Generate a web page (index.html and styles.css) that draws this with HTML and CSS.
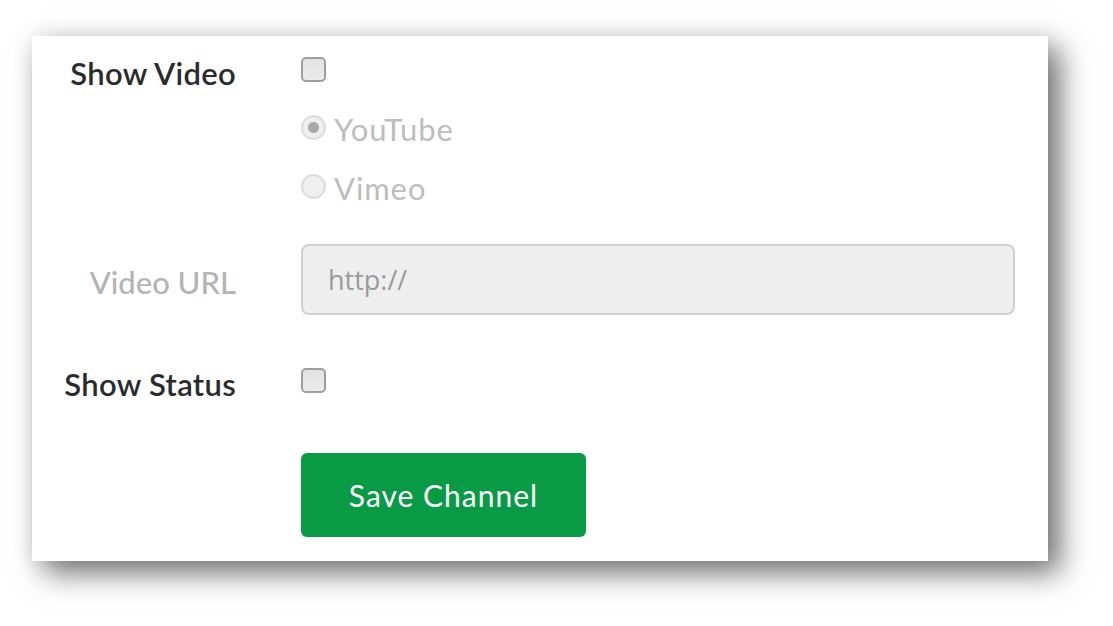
FILE: index.html
```html
<!DOCTYPE html>
<html>
<head>
<meta charset="utf-8">
<link rel="stylesheet" href="styles.css">
</head>
<body>
<div class="card">
  <div class="row r1">
    <div class="label">Show Video</div>
    <div class="control"><input type="checkbox" class="check"></div>
  </div>
  <div class="row r2">
    <div class="label"></div>
    <div class="control"><label class="radio-line"><input type="radio" name="v" class="radio" checked disabled><span>YouTube</span></label></div>
  </div>
  <div class="row r3">
    <div class="label"></div>
    <div class="control"><label class="radio-line"><input type="radio" name="v" class="radio" disabled><span>Vimeo</span></label></div>
  </div>
  <div class="row r4">
    <div class="label muted">Video URL</div>
    <div class="control"><div class="input">http://</div></div>
  </div>
  <div class="row r5">
    <div class="label">Show Status</div>
    <div class="control"><input type="checkbox" class="check"></div>
  </div>
  <div class="row r6">
    <div class="label"></div>
    <div class="control"><button class="btn">Save Channel</button></div>
  </div>
</div>
</body>
</html>
```
FILE: styles.css
```css
html, body {
  margin: 0;
  padding: 0;
  background: #ffffff;
  width: 1113px;
  height: 626px;
  overflow: hidden;
  font-family: Lato, "Liberation Sans", sans-serif;
}
body {
  padding: 36px 0 0 32px;
  box-sizing: border-box;
}
.card {
  width: 1016px;
  height: 525px;
  box-sizing: border-box;
  background: #ffffff;
  padding: 10px 33px 0 0;
  box-shadow: 12px 12px 28px rgba(0,0,0,0.55), 0 0 22px rgba(0,0,0,0.07);
}
.row {
  display: flex;
  align-items: center;
  gap: 65px;
  height: 50px;
}
.label {
  width: 204px;
  flex: none;
  text-align: right;
  font-size: 31px;
  font-weight: 600;
  color: #2b2b2b;
  letter-spacing: 0.3px;
  padding-top: 4px;
}
.label.muted {
  color: #b4b4b4;
  font-weight: 500;
  letter-spacing: 0;
}
.control {
  flex: 1;
  display: flex;
  align-items: center;
}
.r2 { margin-top: 8px; }
.r3 { margin-top: 9px; }
.r4 { margin-top: 31px; height: 71px; }
.r5 { margin-top: 42px; }
.r6 { margin-top: 46px; height: 84px; }

.check {
  -webkit-appearance: none;
  appearance: none;
  margin: 0;
  width: 25px;
  height: 25px;
  box-sizing: border-box;
  border: 2px solid #9e9e9e;
  border-radius: 5px;
  background: linear-gradient(#e2e2e2, #ececec);
  position: relative;
  top: -2px;
}
.radio-line {
  display: flex;
  align-items: center;
  gap: 8px;
  font-size: 31px;
  letter-spacing: 0.9px;
  color: #bdbdbd;
}
.radio {
  -webkit-appearance: none;
  appearance: none;
  margin: 0;
  width: 25px;
  height: 25px;
  box-sizing: border-box;
  border: 2px solid #dcdcdc;
  border-radius: 50%;
  background: #efefef;
  position: relative;
  top: -2px;
}
.radio:checked {
  background: radial-gradient(circle, #a9a9a9 0 5px, #efefef 6px);
}
.input {
  width: 714px;
  height: 71px;
  box-sizing: border-box;
  border: 2px solid #d0d0d0;
  border-radius: 8px;
  background: #eeeeee;
  display: flex;
  align-items: center;
  padding: 0 0 0 25px;
  font-family: "Open Sans", Lato, sans-serif;
  font-size: 27px;
  color: #9a9a9a;
}
.btn {
  width: 285px;
  height: 84px;
  border: none;
  border-radius: 6px;
  background: #099a45;
  color: #ffffff;
  font-family: Lato, "Liberation Sans", sans-serif;
  font-size: 30px;
  font-weight: 400;
  padding: 0;
  letter-spacing: 1px;
}
```
